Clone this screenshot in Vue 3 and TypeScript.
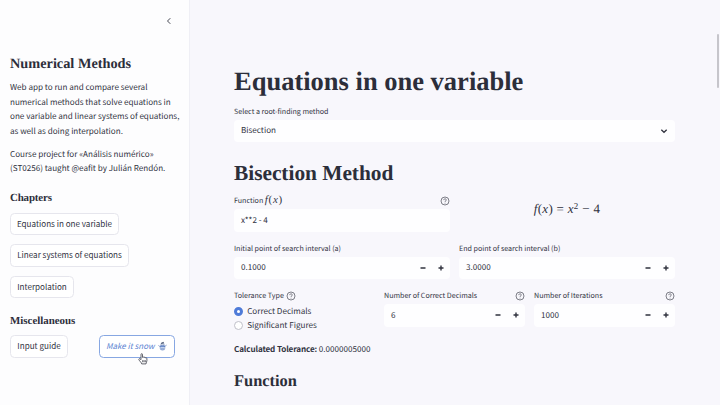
<script setup lang="ts">
import { ref } from 'vue'

const chapters = [
  { label: 'Equations in one variable', width: 109 },
  { label: 'Linear systems of equations', width: 119 },
  { label: 'Interpolation', width: 64 },
]
const toleranceTypes = ['Correct Decimals', 'Significant Figures']
const tolerance = ref('Correct Decimals')
const bounds = [
  { label: 'Initial point of search interval (a)', value: '0.1000' },
  { label: 'End point of search interval (b)', value: '3.0000' },
]
const counts = [
  { label: 'Number of Correct Decimals', value: '6' },
  { label: 'Number of Iterations', value: '1000' },
]
</script>

<template>
  <div class="app">
    <aside class="sidebar">
      <header class="side-top">
        <svg class="collapse" viewBox="0 0 8 8"><path d="M5.3 1.2 2.5 4l2.8 2.8" /></svg>
      </header>
      <h2 class="side-title"><span>Numerical Methods</span></h2>
      <p class="about">Web app to run and compare several<br />numerical methods that solve equations in<br />one variable and linear systems of equations,<br />as well as doing interpolation.</p>
      <p class="about">Course project for «Análisis numérico»<br />(ST0256) taught @eafit by Julián Rendón.</p>
      <h3 class="side-sub chapters-title"><span>Chapters</span></h3>
      <nav class="chapters">
        <button v-for="c in chapters" :key="c.label" class="btn" :style="{ width: c.width + 'px' }">{{ c.label }}</button>
      </nav>
      <h3 class="side-sub misc-title"><span>Miscellaneous</span></h3>
      <div class="misc">
        <button class="btn guide">Input guide</button>
        <button class="btn snow">
          <em>Make it snow</em>
          <svg class="snowman" viewBox="0 0 10 10">
            <circle cx="5" cy="3.4" r="2" fill="#dce5f4" stroke="#8397bc" stroke-width=".5" />
            <path d="M3.3 1.6 6.1.4l.6 1.5-3 .8z" fill="#4b5871" />
            <circle cx="5" cy="7" r="2.8" fill="#c3d3ee" stroke="#7892c4" stroke-width=".5" />
            <path d="M2.3 4.6h5.4v1.1H2.3z" fill="#3c66b7" />
            <path d="M.5 4.4 2.6 6M9.5 3.6 7.5 6M3 8.3h4" fill="none" stroke="#4c6eaf" stroke-width=".7" />
            <circle cx="4.3" cy="3.3" r=".35" fill="#39435a" /><circle cx="5.8" cy="3.3" r=".35" fill="#39435a" />
          </svg>
          <svg class="pointer" viewBox="0 0 10 12">
            <path d="M3 6.7V1.5c0-1.1 1.5-1.1 1.5 0v2.9c.3-.7 1.4-.6 1.5.2.4-.6 1.4-.4 1.5.3.5-.4 1.4-.1 1.4.7v2.1c0 1.2-.8 1.8-.9 3.2H3.7C3.5 9.5 1.6 8.2.9 6.7.5 5.7 1.6 5.3 2.2 6z" />
            <path d="M4.7 7.2v2M6 7.2v2M7.3 7.2v2" />
          </svg>
        </button>
      </div>
    </aside>

    <main class="content">
      <h1><span>Equations in one variable</span></h1>
      <label class="label">Select a root-finding method</label>
      <div class="field select">
        <span>Bisection</span>
        <svg class="caret" viewBox="0 0 8 8"><path d="M1.3 2.8 4 5.3l2.7-2.5" /></svg>
      </div>
      <h2 class="method"><span>Bisection Method</span></h2>

      <div class="row two">
        <div>
          <div class="label"><span>Function <span class="math small"><i>f</i>(<i>x</i>)</span></span>
            <svg class="help" viewBox="0 0 10 10"><circle cx="5" cy="5" r="4" /><path d="M3.7 4.1c0-1.7 2.7-1.6 2.6-.1C6.3 4.9 5 4.9 5 5.9M5 6.8v.7" /></svg>
          </div>
          <div class="field"><span>x**2 - 4</span></div>
        </div>
        <div class="formula"><span class="math"><i>f</i>(<i>x</i>) <b>=</b> <i>x</i><sup>2</sup> <b>−</b> 4</span></div>
      </div>

      <div class="row two">
        <div v-for="b in bounds" :key="b.label">
          <div class="label">{{ b.label }}</div>
          <div class="field number">
            <span>{{ b.value }}</span>
            <svg class="steps" viewBox="0 0 24 8"><path d="M.5 4h5M18.5 4h5M21 1.5v5" /></svg>
          </div>
        </div>
      </div>

      <div class="row three">
        <div>
          <div class="label start"><span>Tolerance Type</span>
            <svg class="help" viewBox="0 0 10 10"><circle cx="5" cy="5" r="4" /><path d="M3.7 4.1c0-1.7 2.7-1.6 2.6-.1C6.3 4.9 5 4.9 5 5.9M5 6.8v.7" /></svg>
          </div>
          <div v-for="t in toleranceTypes" :key="t" class="radio" @click="tolerance = t">
            <span class="dot" :class="{ on: tolerance === t }"></span><span>{{ t }}</span>
          </div>
        </div>
        <div v-for="c in counts" :key="c.label">
          <div class="label"><span>{{ c.label }}</span>
            <svg class="help" viewBox="0 0 10 10"><circle cx="5" cy="5" r="4" /><path d="M3.7 4.1c0-1.7 2.7-1.6 2.6-.1C6.3 4.9 5 4.9 5 5.9M5 6.8v.7" /></svg>
          </div>
          <div class="field number">
            <span>{{ c.value }}</span>
            <svg class="steps" viewBox="0 0 24 8"><path d="M.5 4h5M18.5 4h5M21 1.5v5" /></svg>
          </div>
        </div>
      </div>

      <p class="result"><strong>Calculated Tolerance:</strong> 0.0000005000</p>
      <h3 class="section"><span>Function</span></h3>
      <div class="scrollbar"></div>
    </main>
  </div>
</template>

<style>
body { margin: 0; overflow: hidden; }
</style>

<style scoped>
* { box-sizing: border-box; }
.app {
  display: flex; width: 720px; height: 405px; overflow: hidden;
  background: #f8f7fc; color: #31333f;
  font-family: "Noto Sans CJK SC", "Noto Sans", sans-serif;
  font-size: 8.1px; line-height: 14.4px; text-rendering: geometricPrecision;
}
h1, h2, h3, p { margin: 0; }
h1, h2, h3 { font-family: "Liberation Serif", serif; font-weight: 700; white-space: nowrap; color: #2c2e3a; }
svg { display: block; flex: none; fill: none; stroke: #31333f; }

.sidebar { width: 190px; flex: none; padding: 0 14px 0 10px; background: #fdfdfe; border-right: 1px solid #efeff5; }
.side-top { height: 51px; display: flex; justify-content: flex-end; padding: 17px 2px 0 0; }
.collapse { width: 8px; height: 8px; stroke-width: .9; }
.side-title { height: 30.3px; line-height: 27px; font-size: 14.3px; }
.about { white-space: nowrap; margin-bottom: 9px; }
.side-sub { font-size: 10.9px; line-height: 14px; }
.chapters-title { padding-top: 5.7px; height: 27px; letter-spacing: -.15px; }
.chapters { display: flex; flex-direction: column; gap: 9px; }
.btn {
  height: 22.5px; padding: 0; border: 1px solid #e6e6ed; border-radius: 4.5px; background: #fff;
  color: inherit; font: inherit; line-height: 20px; text-align: center; white-space: nowrap;
}
.misc-title { padding-top: 16px; height: 37px; }
.misc { display: flex; justify-content: space-between; }
.guide { width: 58px; }
.snow { position: relative; width: 76.5px; display: flex; align-items: center; justify-content: center; gap: 4px; border-color: #87a7e2; color: #5a83d2; font-size: 8px; }
.snowman { width: 9px; height: 10px; stroke: none; }
.pointer { position: absolute; left: 38.5px; top: 16.5px; width: 10px; height: 12px; fill: #fff; stroke: #31333f; stroke-width: .75; }

.content { position: relative; flex: 1; padding: 61.5px 45px 0 44px; }
h1 { height: 42.3px; line-height: 38px; font-size: 26.5px; }
.label { display: flex; justify-content: space-between; align-items: center; height: 16px; font-size: 7.1px; line-height: 14px; white-space: nowrap; }
.label.start { justify-content: flex-start; gap: 2.5px; }
.help { width: 10px; height: 10px; margin-top: -1px; stroke: #555762; stroke-width: .75; }
.field { display: flex; align-items: center; justify-content: space-between; height: 22.5px; padding: 0 7px; border-radius: 4px; background: #fefeff; }
.field > span { padding-top: 1.2px; }
.caret { width: 8px; height: 8px; stroke-width: 1.3; }
.method { height: 51.2px; line-height: 62px; font-size: 21.4px; letter-spacing: -.03px; }
.row { display: grid; gap: 9px; }
.two { grid-template-columns: 1fr 1fr; height: 47.3px; }
.three { grid-template-columns: repeat(3, 1fr); height: 54.6px; }
.steps { width: 24px; height: 8px; margin-right: -.5px; stroke-width: 1.4; }
.math { font-family: "Liberation Serif", serif; font-size: 13px; letter-spacing: .3px; }
.math.small { font-size: 11px; letter-spacing: .7px; line-height: 0; }
.math b { font-weight: 400; }
.math sup { font-size: 9px; line-height: 0; vertical-align: 4.5px; }
.formula { display: flex; justify-content: center; padding-top: 8.5px; }
.radio { display: flex; align-items: center; gap: 4.2px; height: 14.5px; white-space: nowrap; }
.radio > span:last-child { padding-top: 1.2px; }
.dot { width: 9px; height: 9px; border: 1px solid #c0c0c9; border-radius: 50%; background: #fff; }
.dot.on { border: 3px solid #4f7bd8; }
.result { height: 24.5px; white-space: nowrap; }
.result strong { letter-spacing: -.12px; }
.section { font-size: 16.4px; line-height: 28px; }
.scrollbar { position: absolute; right: 1px; top: 34px; width: 2px; height: 54px; border-radius: 1px; background: #c6c5cb; }
</style>
